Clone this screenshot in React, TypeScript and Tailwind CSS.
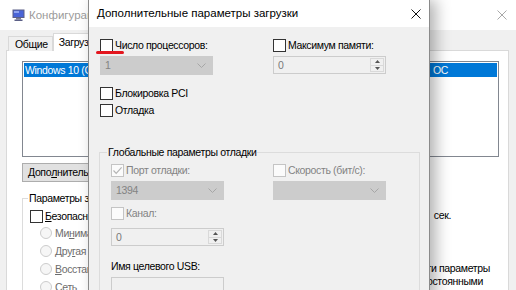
import React from "react";

function Check({ checked = false, disabled = false }: { checked?: boolean; disabled?: boolean }) {
  return (
    <span
      className={
        disabled
          ? "inline-flex h-[13px] w-[13px] shrink-0 items-center justify-center border border-[#c4c4c4] bg-[#fbfbfb]"
          : "inline-flex h-[13px] w-[13px] shrink-0 items-center justify-center border border-[#333333] bg-white"
      }
    >
      {checked && (
        <svg width="11" height="11" viewBox="0 0 11 11">
          <path d="M1.5 5.5 L4.2 8.3 L9.6 2.4" fill="none" stroke={disabled ? "#b4b4b4" : "#222"} strokeWidth="1.2" />
        </svg>
      )}
    </span>
  );
}

function Combo({ value }: { value?: string }) {
  return (
    <div className="flex h-[19px] w-[113px] items-center justify-between border border-[#cccccc] bg-[#cccccc] pl-[4px] pr-[6px] text-[#838383]">
      <span>{value}</span>
      <svg width="9" height="5" viewBox="0 0 9 5">
        <path d="M0.5 0.5 L4.5 4.5 L8.5 0.5" fill="none" stroke="#a6a6a6" strokeWidth="1" />
      </svg>
    </div>
  );
}

function Spin({ value }: { value: string }) {
  return (
    <div className="flex h-[18px] w-[113px] items-stretch border border-[#cccccc] bg-[#f0f0f0]">
      <span className="flex-1 pl-[4px] leading-[16px] text-[#7a7a7a]">{value}</span>
      <div className="my-[1px] mr-[1px] flex w-[14px] flex-col border border-[#d9d9d9]">
        <div className="flex flex-1 items-center justify-center border-b border-[#d9d9d9]">
          <svg width="5" height="3" viewBox="0 0 5 3">
            <path d="M0 3 L2.5 0 L5 3 Z" fill="#555" />
          </svg>
        </div>
        <div className="flex flex-1 items-center justify-center">
          <svg width="5" height="3" viewBox="0 0 5 3">
            <path d="M0 0 L2.5 3 L5 0 Z" fill="#555" />
          </svg>
        </div>
      </div>
    </div>
  );
}

function Radio() {
  return <span className="inline-block h-[12px] w-[12px] shrink-0 rounded-full border border-[#cccccc] bg-[#f6f6f6]" />;
}

function XIcon({ color }: { color: string }) {
  return (
    <svg width="10" height="10" viewBox="0 0 10 10">
      <path d="M0.5 0.5 L9.5 9.5 M9.5 0.5 L0.5 9.5" stroke={color} strokeWidth="1" />
    </svg>
  );
}

export default function App() {
  return (
    <div className="relative h-[290px] w-[516px] overflow-hidden bg-[#f0f0f0] font-['Liberation_Sans',Arial,sans-serif] text-[10.5px] leading-[13px] tracking-[-0.35px] text-black">
      {/* Background window: Конфигурация системы */}
      <div className="flex h-[30px] items-center bg-white">
        <svg className="ml-[12px]" width="13" height="12" viewBox="0 0 13 12">
          <rect x="0.5" y="0.5" width="12" height="8.5" fill="#5b5f86" />
          <rect x="1.5" y="1.5" width="10" height="6.5" fill="#4a64d6" />
          <rect x="2" y="2" width="5" height="2" fill="#8fa3f0" />
          <rect x="4" y="9" width="5" height="1.5" fill="#7c7c90" />
          <rect x="2.5" y="10.5" width="8" height="1.5" fill="#5b5f86" />
        </svg>
        <span className="ml-[4px] text-[11.5px] tracking-normal text-[#9b9b9b]">Конфигурация системы</span>
        <span className="ml-auto mr-[9px] flex">
          <XIcon color="#a8a8a8" />
        </span>
      </div>
      <div className="flex flex-col pl-[6px] pr-[7px]">
        <div className="relative z-10 -mb-px flex h-[21px] items-end pl-[2px]">
          <div className="flex h-[15px] items-center border border-b-0 border-[#d9d9d9] bg-[#f0f0f0] pl-[6px] pr-[4px]">Общие</div>
          <div className="flex h-[18px] items-start border border-b-0 border-[#d9d9d9] bg-white px-[5px] pt-[2px]">Загрузка</div>
          <div className="flex h-[15px] items-center border border-b-0 border-l-0 border-[#d9d9d9] bg-[#f0f0f0] px-[6px]">Службы</div>
        </div>
        <div className="h-[260px] border border-[#d9d9d9] bg-white px-[15px] pt-[10px]">
          <div className="h-[96px] w-[477px] border border-[#828790] p-[1px]">
            <div className="flex h-[14px] items-center whitespace-nowrap bg-[#0078d7] pl-[1px] text-white">
              <span className="w-[408px] overflow-hidden">Windows 10 (C:\WINDOWS) : Текущая ОС; ОС по умолчанию; Загружаемая</span>
              <span>ОС</span>
            </div>
          </div>
          <div className="mt-[6px] flex h-[19px] w-[170px] items-center border border-[#adadad] bg-[#e1e1e1] pl-[5px]">
            Допо<span className="underline">л</span>нительные параметры...
          </div>
          <div className="mt-[10px] flex">
            <fieldset className="w-[290px] border border-[#dcdcdc] pb-[20px] pl-[7px] pt-[5px]">
              <legend className="-ml-[2px] px-[1px] leading-[13px]">Параметры загрузки</legend>
              <div className="flex h-[13px] items-center gap-[2px]">
                <Check />
                <span>
                  <span className="underline">Б</span>езопасный режим
                </span>
              </div>
              <div className="mt-[1px] flex flex-col pl-[10px] text-[#6d6d6d]">
                <div className="flex h-[18px] items-center gap-[3px]">
                  <Radio />
                  <span>
                    Ми<span className="underline">н</span>имальная
                  </span>
                </div>
                <div className="flex h-[18px] items-center gap-[3px]">
                  <Radio />
                  <span>
                    Дру<span className="underline">г</span>ая оболочка
                  </span>
                </div>
                <div className="flex h-[18px] items-center gap-[3px]">
                  <Radio />
                  <span>
                    <span className="underline">В</span>осстановление Active Directory
                  </span>
                </div>
                <div className="flex h-[18px] items-center gap-[3px]">
                  <Radio />
                  <span>
                    С<span className="underline">е</span>ть
                  </span>
                </div>
              </div>
            </fieldset>
            <div className="flex flex-1 flex-col items-end whitespace-nowrap pr-[3px] pt-[14px]">
              <div className="mr-[39px] flex h-[18px] items-center gap-[6px]">
                <span>Таймаут:</span>
                <span className="h-[18px] w-[60px] border border-[#7a7a7a] bg-white pl-[3px] leading-[16px]">30</span>
                <span>сек.</span>
              </div>
              <div className="mt-[38px] flex items-center gap-[3px]">
                <Check />
                <span>Сделать эти параметры</span>
              </div>
              <div className="pr-[7px]">загрузки постоянными</div>
            </div>
          </div>
        </div>
      </div>

      {/* Dialog: Дополнительные параметры загрузки */}
      <div className="absolute left-[88px] top-0 z-20 flex h-[300px] w-[342px] flex-col overflow-hidden border-x border-[#8a8a8a] shadow-[6px_0_14px_rgba(0,0,0,0.3)]">
        <div className="flex h-[27px] shrink-0 items-center justify-between bg-white pl-[8px] pr-[8px]">
          <span className="text-[11.5px] tracking-normal text-black">Дополнительные параметры загрузки</span>
          <XIcon color="#111" />
        </div>
        <div className="min-h-0 flex-1 bg-[#f0f0f0] pl-[11px] pt-[12px]">
          <div className="flex">
            <div className="flex w-[173px] flex-col">
              <div className="flex h-[13px] items-center gap-[2px]">
                <Check />
                <span>Число процессоров:</span>
              </div>
              <div className="mt-[4px]">
                <Combo value="1" />
              </div>
              <div className="mt-[12px] flex h-[13px] items-center gap-[2px]">
                <Check />
                <span>Блокировка PCI</span>
              </div>
              <div className="mt-[4px] flex h-[13px] items-center gap-[2px]">
                <Check />
                <span>Отладка</span>
              </div>
            </div>
            <div className="flex flex-col">
              <div className="flex h-[13px] items-center gap-[2px]">
                <Check />
                <span>Максимум памяти:</span>
              </div>
              <div className="mt-[4px]">
                <Spin value="0" />
              </div>
            </div>
          </div>

          <fieldset className="-ml-px mt-[29px] w-[321px] border border-[#dcdcdc] pb-[20px] pl-[11px] pt-[5px]">
            <legend className="-ml-[4px] px-[1px] leading-[13px]">Глобальные параметры отладки</legend>
            <div className="flex">
              <div className="flex w-[162px] flex-col">
                <div className="flex h-[13px] items-center gap-[2px] text-[#838383]">
                  <Check checked disabled />
                  <span>Порт отладки:</span>
                </div>
                <div className="mt-[4px]">
                  <Combo value="1394" />
                </div>
                <div className="mt-[7px] flex h-[13px] items-center gap-[2px] text-[#838383]">
                  <Check disabled />
                  <span>Канал:</span>
                </div>
                <div className="mt-[8px]">
                  <Spin value="0" />
                </div>
                <div className="mt-[14px] h-[13px]">Имя целевого USB:</div>
                <div className="mt-[4px] h-[19px] w-[113px] border border-[#cccccc] bg-[#f0f0f0]" />
              </div>
              <div className="flex flex-col">
                <div className="flex h-[13px] items-center gap-[2px] text-[#838383]">
                  <Check disabled />
                  <span>Скорость (бит/с):</span>
                </div>
                <div className="mt-[4px]">
                  <Combo />
                </div>
              </div>
            </div>
          </fieldset>
        </div>
      </div>

      {/* red annotation underline */}
      <div className="absolute left-[96px] top-[51px] z-30 h-[3px] w-[28px] rounded-full bg-[#e3161e]" />
    </div>
  );
}
